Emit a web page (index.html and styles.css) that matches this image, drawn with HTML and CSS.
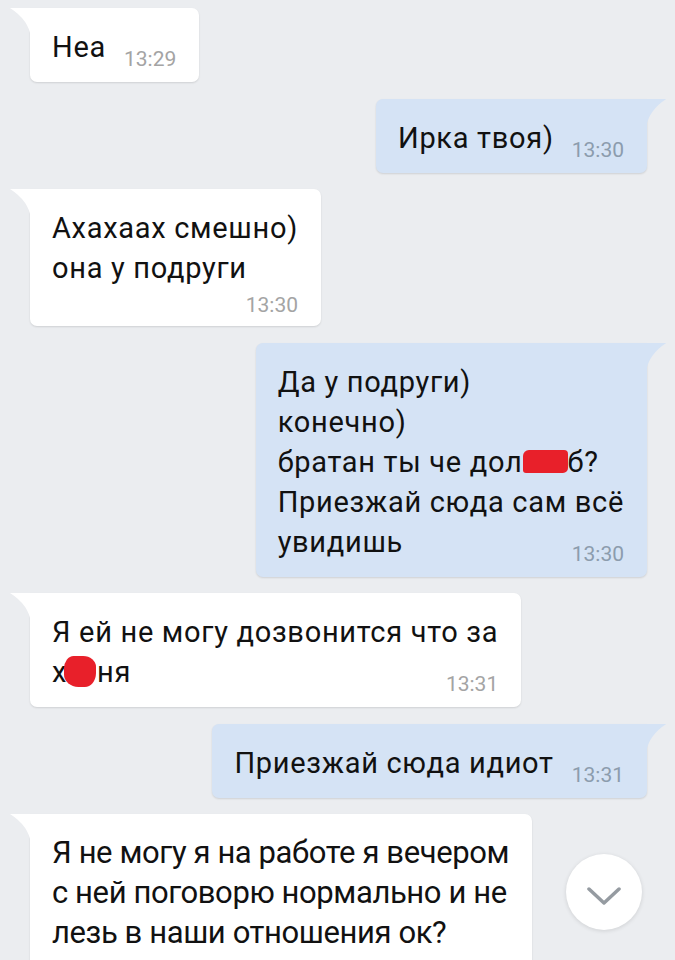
FILE: index.html
```html
<!DOCTYPE html>
<html lang="ru">
<head>
    <meta charset="UTF-8">
    <meta name="viewport" content="width=device-width, initial-scale=1.0">
    <title>Диалог</title>
    <link rel="stylesheet" href="styles.css">
</head>
<body>
    <div class="chat">
        <div class="msg in">Неа<span class="time">13:29</span></div>

        <div class="msg out">Ирка твоя)<span class="time">13:30</span></div>

        <div class="msg in">Ахахаах смешно)<br>она у подруги<span class="time below">13:30</span></div>

        <div class="msg out">Да у подруги)<br>конечно)<br>братан ты че дол<span class="censor censor-wide"></span>б?<br>Приезжай сюда сам всё<br>увидишь<span class="time">13:30</span></div>

        <div class="msg in">Я ей не могу дозвонится что за<br>х<span class="censor censor-blob"></span>ня<span class="time">13:31</span></div>

        <div class="msg out">Приезжай сюда идиот<span class="time">13:31</span></div>

        <div class="msg in narrow">Я не могу я на работе я вечером<br>с ней поговорю нормально и не<br>лезь в наши отношения ок?<span class="time below">13:31</span></div>
    </div>

    <!-- scroll to the newest message -->
    <button class="scroll-down" type="button">
        <svg width="34" height="18" viewBox="0 0 34 18">
            <polyline points="2,2 17,16 32,2" fill="none" stroke="#959ba1" stroke-width="3.5" stroke-linecap="round" stroke-linejoin="round"/>
        </svg>
    </button>
</body>
</html>
```

FILE: styles.css
```css
body {
    margin: 0;
    height: 960px;
    overflow: hidden;
    background-color: #ebedf0;
    font-family: Roboto, "Noto Sans", sans-serif;
    color: #111;
}

.chat {
    display: flex;
    flex-direction: column;
    align-items: flex-start;
    gap: 16.5px;
    padding: 8px 28px 0 30px;
}

.msg {
    position: relative;
    display: flow-root;
    padding: 19px 23px 13px 22px;
    font-size: 29px;
    line-height: 40px;
    letter-spacing: 0.7px;
    white-space: nowrap;
    box-shadow: 0 1px 2px rgba(0, 0, 0, 0.12);
}

/* the last message is set a bit taller and tighter */
.msg.narrow {
    font-size: 31px;
    letter-spacing: -0.4px;
}

/* bubble tails */
.msg::before {
    content: "";
    position: absolute;
    top: 0;
    width: 21px;
    height: 30px;
}

.in {
    background-color: #fff;
    border-radius: 0 7px 7px 7px;
}

.in::before {
    left: -20px;
    background-color: #fff;
    clip-path: path('M0 0 H21 V30 Q19 12 0 0 Z');
}

.out {
    align-self: flex-end;
    background-color: #d5e3f5;
    border-radius: 7px 0 7px 7px;
}

.out::before {
    right: -20px;
    background-color: #d5e3f5;
    clip-path: path('M21 0 H0 V30 Q2 12 21 0 Z');
}

.time {
    float: right;
    margin: 22px 0 0 18px;
    font-size: 21px;
    line-height: 20px;
    letter-spacing: 0;
    color: #a4a4a4;
}

.out .time {
    color: #8c9cad;
}

.time.below {
    float: none;
    display: block;
    text-align: right;
    margin: 7px 0 -2px;
}

.censor {
    display: inline-block;
    background-color: #e8202a;
}

.censor-wide {
    width: 45px;
    height: 23px;
    border-radius: 6px 4px 5px 3px;
    vertical-align: -1px;
}

.censor-blob {
    width: 32px;
    height: 31px;
    margin-left: -3px;
    margin-right: 1px;
    border-radius: 30% 40% 35% 45% / 40% 35% 45% 40%;
    vertical-align: -5px;
}

.scroll-down {
    position: absolute;
    right: 33px;
    bottom: 30px;
    width: 76px;
    height: 76px;
    display: flex;
    align-items: center;
    justify-content: center;
    padding: 0;
    padding-top: 8px;
    border: none;
    border-radius: 50%;
    background-color: #fff;
    box-shadow: 0 1px 4px rgba(0, 0, 0, 0.12);
}
```
